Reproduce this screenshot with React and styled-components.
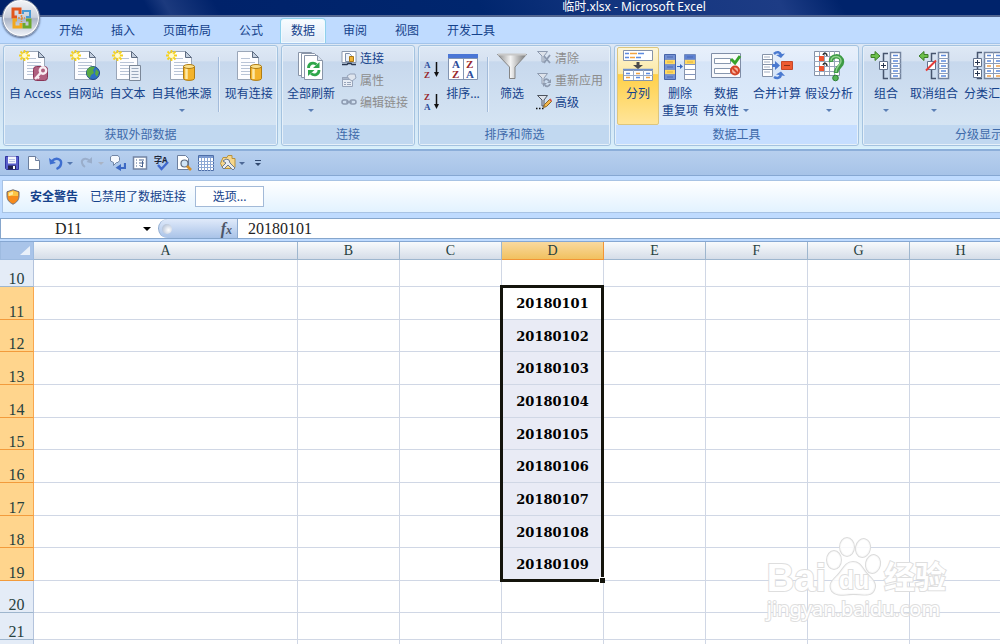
import React from 'react'
import styled, { createGlobalStyle, css } from 'styled-components'

const UI_FONT = '"Noto Sans", "Noto Sans CJK SC", sans-serif'
const SHEET_FONT = '"Liberation Serif", "Noto Sans CJK SC", serif'

const TABS = ['开始', '插入', '页面布局', '公式', '数据', '审阅', '视图', '开发工具']

const COLUMNS = [
  { name: 'A', width: 264 },
  { name: 'B', width: 102 },
  { name: 'C', width: 102 },
  { name: 'D', width: 102 },
  { name: 'E', width: 102 },
  { name: 'F', width: 102 },
  { name: 'G', width: 102 },
  { name: 'H', width: 102 },
]

const ROWS = [
  { number: 10, height: 27 },
  { number: 11, height: 33, value: '20180101' },
  { number: 12, height: 32, value: '20180102' },
  { number: 13, height: 33, value: '20180103' },
  { number: 14, height: 33, value: '20180104' },
  { number: 15, height: 32, value: '20180105' },
  { number: 16, height: 33, value: '20180106' },
  { number: 17, height: 33, value: '20180107' },
  { number: 18, height: 32, value: '20180108' },
  { number: 19, height: 33, value: '20180109' },
  { number: 20, height: 32 },
  { number: 21, height: 27 },
  { number: 22, height: 27 },
]

const SELECTION_HEIGHT = ROWS.filter(row => row.value).reduce(
  (total, row) => total + row.height,
  0
)

function App() {
  return (
    <>
      <GlobalStyle />
      <Window>
        <TitleBar>
          <h1>临时.xlsx - Microsoft Excel</h1>
        </TitleBar>
        <OfficeButton aria-label="Office">
          <OfficeLogo />
        </OfficeButton>
        <TabBar>
          {TABS.map(tab => (
            <Tab key={tab} $active={tab === '数据'}>
              {tab}
            </Tab>
          ))}
        </TabBar>
        <Ribbon />
        <QuickAccess />
        <SecurityBar>
          <ShieldIcon />
          <strong>安全警告</strong>
          <span>已禁用了数据连接</span>
          <OptionsButton>选项...</OptionsButton>
        </SecurityBar>
        <FormulaBar>
          <NameBox aria-label="名称框" defaultValue="D11" />
          <NameArrow aria-label="名称列表">
            <Caret $size={4} $color="#000" />
          </NameArrow>
          <FxArea>
            <FxKnob />
            <FxButton aria-label="插入函数">
              f<small>x</small>
            </FxButton>
          </FxArea>
          <FormulaInput aria-label="编辑栏" defaultValue="20180101" />
        </FormulaBar>
        <Sheet />
        <Watermark />
      </Window>
    </>
  )
}

function Ribbon() {
  return (
    <RibbonBar>
      <Group title="获取外部数据" width={275}>
        <LargeButton icon={<SourceIcon star kind="access" />} label="自 Access" />
        <LargeButton icon={<SourceIcon star kind="web" />} label="自网站" />
        <LargeButton icon={<SourceIcon star kind="text" />} label="自文本" />
        <LargeButton icon={<SourceIcon star kind="db" />} label="自其他来源" arrow />
        <Separator />
        <LargeButton icon={<SourceIcon kind="db" />} label="现有连接" />
      </Group>
      <Group title="连接" width={134}>
        <LargeButton icon={<RefreshIcon />} label="全部刷新" arrow />
        <SmallStack>
          <SmallButton>
            <ConnectionIcon />
            连接
          </SmallButton>
          <SmallButton disabled>
            <PropertiesIcon />
            属性
          </SmallButton>
          <SmallButton disabled>
            <LinkIcon />
            编辑链接
          </SmallButton>
        </SmallStack>
      </Group>
      <Group title="排序和筛选" width={193}>
        <SortStack>
          <SortButton aria-label="升序">
            <SortIcon top="A" bottom="Z" />
          </SortButton>
          <SortButton aria-label="降序">
            <SortIcon top="Z" bottom="A" />
          </SortButton>
        </SortStack>
        <LargeButton icon={<SortDialogIcon />} label="排序..." />
        <Separator />
        <LargeButton icon={<FunnelIcon />} label="筛选" />
        <SmallStack>
          <SmallButton disabled>
            <SmallFunnelIcon kind="clear" />
            清除
          </SmallButton>
          <SmallButton disabled>
            <SmallFunnelIcon kind="again" />
            重新应用
          </SmallButton>
          <SmallButton>
            <SmallFunnelIcon kind="advanced" />
            高级
          </SmallButton>
        </SmallStack>
      </Group>
      <Group title="数据工具" width={245} hot>
        <LargeButton tight hot icon={<ColumnsIcon />} label="分列" />
        <LargeButton tight icon={<DuplicatesIcon />} label="删除" second="重复项" />
        <LargeButton tight icon={<ValidationIcon />} label="数据" second="有效性" arrow />
        <LargeButton tight icon={<ConsolidateIcon />} label="合并计算" />
        <LargeButton tight icon={<WhatIfIcon />} label="假设分析" arrow />
      </Group>
      <Group title="分级显示" width={234}>
        <LargeButton icon={<OutlineIcon kind="group" />} label="组合" arrow />
        <LargeButton icon={<OutlineIcon kind="ungroup" />} label="取消组合" arrow />
        <LargeButton icon={<OutlineIcon kind="subtotal" />} label="分类汇总" />
      </Group>
    </RibbonBar>
  )
}

function Group({ title, width, hot, children }) {
  return (
    <GroupBox $width={width} $hot={hot}>
      <GroupContent>{children}</GroupContent>
      <GroupTitle $hot={hot}>{title}</GroupTitle>
    </GroupBox>
  )
}

function LargeButton({ icon, label, second, arrow, hot, tight }) {
  return (
    <BigButton $hot={hot} $tight={tight}>
      {icon}
      <span>{label}</span>
      {(second || arrow) && (
        <SecondLine>
          {second}
          {arrow && <Caret $size={3} $color="#5a7fb5" />}
        </SecondLine>
      )}
    </BigButton>
  )
}

function QuickAccess() {
  return (
    <QuickBar>
      <QuickButton aria-label="保存">
        <svg width="16" height="16">
          <path d="M1.5 1.500h13v13h-12l-1-1z" fill="#5a5fcb" stroke="#3034a0" />
          <path d="M4 1.500h8v7H4z" fill="#f4f6fd" />
          <path d="M4 10.500h8v4H4z" fill="#23234f" />
          <path d="M9 11h2v3H9z" fill="#fff" />
          <path d="M5 4.500h6M5 6.500h6" stroke="#b9c2e6" />
        </svg>
      </QuickButton>
      <QuickButton aria-label="新建">
        <svg width="16" height="16">
          <path d="M2.500 1.500h7l4 4v9h-11z" fill="#fff" stroke="#6c7f9e" />
          <path d="M9.500 1.500v4h4" fill="#dfe6f2" stroke="#6c7f9e" />
        </svg>
      </QuickButton>
      <QuickPair>
        <QuickButton aria-label="撤消">
          <svg width="16" height="16">
            <path d="M4 6c4-4 10-2 9 3-.4 2.300-2 4-4.500 5" fill="none" stroke="#3f6fd0" strokeWidth="2.400" />
            <path d="M1 3l1 6.500L8 8z" fill="#3f6fd0" />
          </svg>
        </QuickButton>
        <QuickArrow aria-label="撤消列表">
          <Caret $size={3} $color="#5578b0" />
        </QuickArrow>
      </QuickPair>
      <QuickPair>
        <QuickButton aria-label="恢复">
          <svg width="16" height="16">
            <path d="M11 6c-4-4-9-2-8 2 .4 2 1.500 3 3 4" fill="none" stroke="#9aaecb" strokeWidth="2" />
            <path d="M13 2v6.500L7.500 7z" fill="#9aaecb" />
          </svg>
        </QuickButton>
        <QuickArrow aria-label="恢复列表">
          <Caret $size={3} $color="#a9b4c6" />
        </QuickArrow>
      </QuickPair>
      <QuickButton aria-label="繁简转换">
        <svg width="16" height="16">
          <path d="M2 .5h6l1.500 2v3L8 7.500H6.500l-3 3v-3L.5 6V2z" fill="#f5f8fd" stroke="#7186a6" />
          <path d="M15 8v5H9" fill="none" stroke="#3d69c4" strokeWidth="2.200" />
          <path d="M11 9v7l-5.500-3.200z" fill="#3d69c4" />
        </svg>
      </QuickButton>
      <QuickButton aria-label="属性表">
        <svg width="16" height="16">
          <path d="M1.500 2h13v12h-13z" fill="#fff" stroke="#7384a2" strokeWidth="1.500" />
          <path d="M4 5h1M7 5h5M4 8h1M4 11h1M7 8h5M10.500 6v6l-3-1.500" fill="none" stroke="#48628e" />
        </svg>
      </QuickButton>
      <QuickButton aria-label="拼写检查">
        <svg width="16" height="16">
          <text x="0" y="8" fontSize="8" fontWeight="700" fill="#1b2437">字A</text>
          <path d="M4 10l3.500 4L14 7" fill="none" stroke="#4069cd" strokeWidth="2.400" />
        </svg>
      </QuickButton>
      <QuickButton aria-label="打印预览">
        <svg width="16" height="16">
          <path d="M1.500.5h8l3 3v11h-11z" fill="#fff" stroke="#6c7f9e" />
          <circle cx="8.500" cy="8.500" r="3.500" fill="#cfe4f7" stroke="#5c6a80" strokeWidth="1.200" />
          <path d="M11 11l4 4" stroke="#d48f2b" strokeWidth="2.600" />
        </svg>
      </QuickButton>
      <QuickButton aria-label="表格">
        <svg width="16" height="16">
          <path d="M.5.5h15v15H.5z" fill="#fff" stroke="#4d6ea8" />
          <path d="M1 1h14v2H1z" fill="#7c9bd1" />
          <path d="M0 6.500h16M0 9.500h16M0 12.500h16M3.500 3v13M6.500 3v13M9.500 3v13M12.500 3v13" stroke="#8da8d4" />
        </svg>
      </QuickButton>
      <QuickPair>
        <QuickButton aria-label="工具">
          <svg width="16" height="16">
            <path d="M3 2.500h4l1-2h4v3h3v9l-3 1H3l-2.500-5z" fill="#f6d68b" stroke="#b8923c" />
            <path d="M3 6l3-2 3 1 1 3 5 5-2 2-5-5-4 4-2-2 4-4z" fill="#e9edf3" stroke="#6c7a8f" />
          </svg>
        </QuickButton>
        <QuickArrow aria-label="工具列表">
          <Caret $size={3} $color="#4d6896" />
        </QuickArrow>
      </QuickPair>
      <QuickButton aria-label="自定义快速访问工具栏">
        <svg width="16" height="16">
          <path d="M4 5.500h6" stroke="#31496f" />
          <path d="M4 8h6l-3 3z" fill="#31496f" />
        </svg>
      </QuickButton>
    </QuickBar>
  )
}

function Sheet() {
  return (
    <SheetArea>
      <Grid>
        <colgroup>
          <col width="34" />
          {COLUMNS.map(({ name, width }) => (
            <col key={name} width={width} />
          ))}
        </colgroup>
        <thead>
          <tr>
            <Corner aria-label="全选">
              <svg width="10" height="9">
                <path d="M10 0v9H0z" fill="#e9f0fa" />
              </svg>
            </Corner>
            {COLUMNS.map(({ name }) => (
              <ColumnHead key={name} scope="col" $selected={name === 'D'}>
                {name}
              </ColumnHead>
            ))}
          </tr>
        </thead>
        <tbody>
          {ROWS.map(({ number, height, value }) => (
            <tr key={number}>
              <RowHead scope="row" $height={height} $selected={Boolean(value)}>
                {number}
              </RowHead>
              {COLUMNS.map(({ name }) =>
                name === 'D' && value ? (
                  <Cell key={name} $selected={number !== 11}>
                    {value}
                    {number === 11 && (
                      <Selection>
                        <FillHandle />
                      </Selection>
                    )}
                  </Cell>
                ) : (
                  <Cell key={name} />
                )
              )}
            </tr>
          ))}
        </tbody>
      </Grid>
    </SheetArea>
  )
}

function Watermark() {
  return (
    <WatermarkBox>
      <WatermarkLogo>
        <span>Bai</span>
        <Paw>
          <svg width="56" height="60" fill="#fff" fillOpacity="0.8" stroke="#dcdcdc" strokeWidth="2">
            <ellipse cx="8" cy="24" rx="7" ry="9" />
            <ellipse cx="21" cy="11" rx="7" ry="9" />
            <ellipse cx="37" cy="12" rx="7" ry="9" transform="rotate(12 37 12)" />
            <ellipse cx="47" cy="28" rx="7" ry="9" transform="rotate(12 47 28)" />
            <path d="M27 26c8 0 9 7 15 13 5 5 9 9 6 15-3 7-12 4-21 4s-16 3-21-3c-4-7 1-11 6-16s7-13 15-13z" />
          </svg>
          <b>du</b>
        </Paw>
        <em>经验</em>
      </WatermarkLogo>
      <WatermarkUrl>jingyan.baidu.com</WatermarkUrl>
    </WatermarkBox>
  )
}

/* Icons */

function OfficeLogo() {
  return (
    <svg width="24" height="24" fill="none" strokeWidth="3">
      <path d="M11 8V3H4v8h4" stroke="#e2551c" />
      <path d="M14 8V5h7v6h-4" stroke="#4a9ad4" strokeWidth="2" />
      <path d="M8 14H5v7h7v-4" stroke="#f2a81d" />
      <path d="M15 17v4h6v-7h-4" stroke="#6ba82d" />
      <path d="M9 12h7M12.500 9v7" stroke="#e08a3a" strokeWidth="1.500" strokeDasharray="2 1" />
    </svg>
  )
}

function Star() {
  return (
    <g>
      <path
        d="M5.500 0v11M0 5.500h11M1.500 1.500l8 8M9.500 1.500l-8 8"
        stroke="#f5d21f"
        strokeWidth="1.800"
      />
      <circle cx="5.500" cy="5.500" r="2.500" fill="#fffbd0" />
    </g>
  )
}

function Cylinder() {
  return (
    <g stroke="#b07d13">
      <path d="M17.500 16.500v12c0 2.500 11 2.500 11 0v-12z" fill="#f3b32c" />
      <path d="M20.500 18v11" stroke="#fde9a6" strokeWidth="2.500" />
      <ellipse cx="23" cy="16.500" rx="5.500" ry="2" fill="#fbe08c" />
    </g>
  )
}

function SourceIcon({ kind, star }) {
  return (
    <svg width="32" height="32" fill="none">
      <path d="M4.500 1.500h15l6 6v22h-21z" fill="#fdfdff" stroke="#9aa6b8" />
      <path d="M19.500 1.500v6h6z" fill="#c3cedd" stroke="#5f6d82" />
      <path
        d="M8 8.500h9M8 12.500h14M8 15.500h14M8 18.500h14M8 21.500h10M8 24.500h10"
        stroke="#b9c4d6"
      />
      {star && <Star />}
      {kind === 'db' && <Cylinder />}
      {kind === 'access' && (
        <g>
          <rect x="14.500" y="16.500" width="14" height="14" rx="3" fill="#b06080" stroke="#8a3556" />
          <circle cx="24" cy="20.500" r="3.200" stroke="#f9eef2" strokeWidth="2.400" />
          <path d="M21.500 23l-5.500 6M18 26.500l2 2" stroke="#f9eef2" strokeWidth="2.400" />
        </g>
      )}
      {kind === 'web' && (
        <g>
          <circle cx="23" cy="23" r="6.500" fill="#2f6fc4" stroke="#1d4788" />
          <path d="M17 20c2-4 6-4 8-3l-2 3 1 3-3 2-1 3c-3-1-4-5-3-8zM26 19l3 3-2 5-2-3z" fill="#58a943" />
        </g>
      )}
      {kind === 'text' && (
        <g>
          <path d="M17.500 15.500h11v15h-11z" fill="#eef2f8" stroke="#7b8798" />
          <path d="M19.500 18.500h7M19.500 21.500h7M19.500 24.500h7M19.500 27.500h7" stroke="#9ba9bd" />
        </g>
      )}
    </svg>
  )
}

function RefreshIcon() {
  return (
    <svg width="32" height="32" fill="#fff" stroke="#8995a8">
      <path d="M3.500 2.500h13l4 4v19h-17z" />
      <path d="M6.500 3.500h13l4 4v20h-17z" />
      <path d="M9.500 5.500h13l5 5v19h-18z" />
      <path d="M22.500 5.500v5h5" fill="#dbe3ee" />
      <g fill="none" stroke="#2ea64a" strokeWidth="2.800">
        <path d="M13.500 18c0-5 5-6 8-3.500M24 20c0 5-5 6-8 3.500" />
      </g>
      <path d="M24.500 12v6H18z" fill="#2ea64a" stroke="none" />
      <path d="M13 26v-6h6.500z" fill="#2ea64a" stroke="none" />
    </svg>
  )
}

function ConnectionIcon() {
  return (
    <svg width="16" height="16" fill="none">
      <path d="M1 1.500h14v11H1z" fill="#fff" stroke="#8a98ae" />
      <path d="M4.500 3.500h4l2 2v6h-6z" fill="#eef3fa" stroke="#8191aa" />
      <path d="M8.500 6.500h4v5h-4z" fill="#f0b234" stroke="#a87817" />
      <path d="M1 14.500h5l1-1h3l1 1h4" stroke="#26354f" strokeWidth="1.500" />
    </svg>
  )
}

function PropertiesIcon() {
  return (
    <svg width="16" height="16" fill="none" stroke="#98a5bb">
      <path d="M1.500 5.500h10v9h-10z" fill="#e8edf5" />
      <path d="M1.500 5.500h10v2h-10z" fill="#aab7cb" />
      <path d="M3 10.500h2M6 10.500h4M3 12.500h2M6 12.500h4" />
      <path d="M6 4l3-2h5l1 4-4 3-3-2z" fill="#dfe5ee" />
    </svg>
  )
}

function LinkIcon() {
  return (
    <svg width="16" height="16" fill="none" stroke="#8d9bb1" strokeWidth="1.500">
      <rect x="1" y="6" width="6" height="4" rx="2" />
      <rect x="9" y="6" width="6" height="4" rx="2" />
      <path d="M5 8h6" />
    </svg>
  )
}

function SortIcon({ top, bottom }) {
  const color = letter => (letter === 'A' ? '#2b4d9b' : '#97262b')
  return (
    <svg width="16" height="18" fontSize="9" fontWeight="700" fontFamily="Liberation Serif">
      <text x="0" y="7" fill={color(top)}>{top}</text>
      <text x="0" y="17" fill={color(bottom)}>{bottom}</text>
      <path d="M12.500 1v12" stroke="#111" strokeWidth="1.500" />
      <path d="M10 11h5l-2.500 5z" fill="#111" />
    </svg>
  )
}

function SortDialogIcon() {
  return (
    <svg width="32" height="32" fontSize="11" fontWeight="700" fontFamily="Liberation Serif">
      <path d="M1.500 4.500h29v25h-29z" fill="#fff" stroke="#8294b1" />
      <path d="M1 4h30v4H1z" fill="#4a76d6" />
      <path d="M1.500 8.500h29M16.500 8v21" stroke="#8496b3" />
      <g fill="#2b4d9b">
        <text x="5" y="18">A</text>
        <text x="19" y="28">A</text>
      </g>
      <g fill="#97262b">
        <text x="5" y="28">Z</text>
        <text x="19" y="18">Z</text>
      </g>
    </svg>
  )
}

function FunnelIcon() {
  return (
    <svg width="32" height="32">
      <defs>
        <linearGradient id="funnel">
          <stop offset="0" stopColor="#8b8b8b" />
          <stop offset="0.45" stopColor="#f4f4f4" />
          <stop offset="1" stopColor="#737373" />
        </linearGradient>
      </defs>
      <path d="M1.500 4.500h29L19 17v11.500h-5.500V17z" fill="url(#funnel)" stroke="#858585" />
      <path d="M2 4.500h28" stroke="#c9c9c9" strokeWidth="2" />
    </svg>
  )
}

function SmallFunnelIcon({ kind }) {
  const stroke = kind === 'advanced' ? '#4d535e' : '#8e9bb0'
  return (
    <svg width="16" height="16" fill="none" stroke={stroke}>
      <path d="M1.500 1.500h10L8 6v6H6V6z" fill="#dde2ea" />
      {kind === 'clear' && <path d="M8 6l6 7M14 5l-6 8" strokeWidth="1.800" />}
      {kind === 'again' && (
        <g>
          <path d="M8 9c1-3 4-2 5 0M14 12c-1 3-4 3-5 1" strokeWidth="1.800" />
          <path d="M15 7v4h-4zM7 15v-4h4z" fill={stroke} stroke="none" />
        </g>
      )}
      {kind === 'advanced' && (
        <g>
          <path d="M0 14.500h8" stroke="#111" strokeWidth="1.500" strokeDasharray="1.500 1.500" />
          <path d="M7.500 13.500l1-3 5-5 2 2-5 5z" fill="#f2b64a" stroke="#8b6420" />
          <path d="M13 5.500l1.500-1 1.500 2-1 1z" fill="#d9534a" stroke="none" />
        </g>
      )}
    </svg>
  )
}

function ColumnsIcon() {
  return (
    <svg width="32" height="32" fill="#fff">
      <path d="M1.500.5h29v10h-29z" stroke="#8693a9" />
      <path d="M1.500 20.500h29v10h-29z" stroke="#8693a9" />
      <path d="M1 19.500h30" stroke="#6b8fd0" strokeWidth="1.500" />
      <path d="M3 3.500h4M16 3.500h6M3 7.500h4M14 7.500h5M4 23.500h4M14 27.500h4M24 23.500h4" stroke="#5d8be0" strokeWidth="1.500" />
      <path d="M8 3.500h7M8 7.500h5M4 27.500h4M14 23.500h4M24 27.500h4" stroke="#f1a341" strokeWidth="1.500" />
      <path d="M11.500 20v10M21.500 20v10M2 25.500h29" stroke="#9aabc8" />
      <path d="M14.500 12h3v3h3.500L16 19l-5-4h3.500z" fill="#4a4a4a" />
    </svg>
  )
}

function DuplicatesIcon() {
  return (
    <svg width="32" height="32">
      <path d="M.5 4.500h11v25H.5z" fill="#7391d3" stroke="#4764a9" />
      <path d="M1 10h10v4H1zM1 20h10v4H1z" fill="#ffd964" />
      <path d="M20.500 4.500h11v25h-11z" fill="#fff" stroke="#8694ad" />
      <path d="M20.500 4.500h11v5h-11z" fill="#5e82d2" />
      <path d="M21 10h10v4H21z" fill="#ffd964" />
      <path d="M1 9.500h10M1 14.500h10M1 19.500h10M1 24.500h10M21 9.500h10M21 14.500h10M21 19.500h10M21 24.500h10" stroke="#8295bd" />
      <path d="M3 7h6M3 17h6M3 27h6M23 7h6" stroke="#4a69b4" />
      <path d="M3 12h6M3 22h6M23 12h6" stroke="#e0b23c" />
      <path d="M13 16.500h4" stroke="#3465bd" />
      <path d="M16 14l3 2.500-3 2.500z" fill="#3465bd" />
    </svg>
  )
}

function ValidationIcon() {
  return (
    <svg width="32" height="32" fill="none">
      <path d="M1.500 3.500h29v24h-29z" fill="#f7f9fc" stroke="#7f8da6" />
      <path d="M4.500 8.500h16v5h-16zM4.500 18.500h16v5h-16z" fill="#fff" stroke="#8797ae" />
      <path d="M21 9l4 4 5-7" stroke="#37a32b" strokeWidth="3" />
      <circle cx="25" cy="20.500" r="4" fill="#f7b39f" stroke="#d44427" strokeWidth="2" />
      <path d="M22.500 18l5 5" stroke="#d44427" strokeWidth="2" />
    </svg>
  )
}

function ConsolidateIcon() {
  return (
    <svg width="32" height="32" fill="none">
      <path d="M1.500 4.500h10v22h-10z" fill="#fff" stroke="#8593a9" />
      <path d="M1.500 9.500h10M1.500 14.500h10M1.500 19.500h10" stroke="#8593a9" />
      <path d="M3 7h6M3 12h6M3 17h6M3 22h6" stroke="#a3afc3" />
      <path d="M13 4c3-3 6-2 7 1M13 27c3 2 6 1 7-2" stroke="#4b7ad0" strokeWidth="2.600" />
      <path d="M24 3.500L20 8l-5-3zM24 26l-4-4.500-5 3z" fill="#4b7ad0" />
      <path d="M11 14h3v-3l5 4.500-5 4.500v-3h-3z" fill="#4b7ad0" />
      <path d="M20.500 11.500h11v8h-11z" fill="#ee5a30" stroke="#c4472a" />
      <path d="M23 15.500h6" stroke="#8b2f16" />
    </svg>
  )
}

function WhatIfIcon() {
  return (
    <svg width="32" height="32" fill="none">
      <path d="M1.500 1.500h25v24h-25z" fill="#fff" stroke="#8491a7" />
      <path d="M6.500 1v24M11.500 1v24M16.500 1v24M21.500 1v24M1 6.500h25M1 11.500h25M1 16.500h25M1 21.500h25" stroke="#98a5ba" />
      <path d="M6 6h5v5H6zM6 16h5v5H6z" fill="#f0512c" />
      <path d="M10 5c1-3 4-2 4 1M10 15c1-3 4-2 4 1" stroke="#333" strokeWidth="1.500" />
      <path d="M18 12c-1-7 11-8 11 0 0 5-6 5-6 11" stroke="#3d9b44" strokeWidth="4.500" />
      <path d="M18 11c0-6 10-6 10 0 0 4-5 5-5 11" stroke="#8fd08c" strokeWidth="1.500" />
      <circle cx="22.500" cy="28" r="2.800" fill="#55b456" stroke="#2c7f35" />
    </svg>
  )
}

function OutlineIcon({ kind }) {
  const subtotal = kind === 'subtotal'
  return (
    <svg width="32" height="32" fill="none">
      <path d={subtotal ? 'M12.500 2.500h18v26h-18z' : 'M20.500 2.500h10v26h-10z'} fill="#fff" stroke="#74849e" strokeWidth="1.500" />
      <path d={subtotal ? 'M12 8.500h19M12 13.500h19M12 18.500h19M12 23.500h19M21.500 2v27' : 'M20 8.500h11M20 13.500h11M20 18.500h11M20 23.500h11'} stroke="#8d9db8" />
      <path d={subtotal ? 'M15 5.500h4M24 5.500h4M15 11h4M24 11h4M15 21h4M24 21h4' : 'M23 5.500h5M23 11h5M23 16h5M23 21h5M23 26h5'} stroke="#5e8bdd" strokeWidth="1.500" />
      {subtotal ? (
        <g>
          <path d="M15 16h4M24 16h4M15 26h4M24 26h4" stroke="#f0a04b" strokeWidth="1.500" />
          <path d="M10 2.500H5.500v26H10" stroke="#46546d" strokeWidth="1.500" />
          <path d="M1.500 8.500h8v8h-8zM1.500 19.500h8v8h-8z" fill="#fff" stroke="#63728c" />
          <path d="M3 12.500h5M5.500 10v5M3 23.500h5M5.500 21v5" stroke="#26344e" />
        </g>
      ) : (
        <path d="M18 3.500h-4.500v25H18" stroke="#46546d" strokeWidth="1.500" />
      )}
      {kind === 'group' && (
        <g>
          <path d="M9.500 11.500h8v8h-8z" fill="#fff" stroke="#63728c" />
          <path d="M11 15.500h5M13.500 13v5" stroke="#26344e" />
          <path d="M1 4.500h4v-3L10 6l-5 4.500v-3H1z" fill="#6cc04b" stroke="#3c7d28" />
        </g>
      )}
      {kind === 'ungroup' && (
        <g>
          <path d="M9.500 11.500h8v8h-8z" fill="#fff" stroke="#63728c" />
          <path d="M8 20.500L18 10.500" stroke="#e63b37" strokeWidth="2" />
          <path d="M10 4.500H6v-3L1 6l5 4.500v-3h4z" fill="#6cc04b" stroke="#3c7d28" />
        </g>
      )}
    </svg>
  )
}

function ShieldIcon() {
  return (
    <svg width="14" height="16">
      <path d="M7 .8l6 2v4c0 4-2 6.500-6 8.400C3 13.300 1 10.800 1 6.800v-4z" fill="#f78b1c" stroke="#6b6d75" />
      <path d="M7 1.500L2 3.200V7h5zM7 1.500l5 1.700V7H7z" fill="#fcc545" />
      <path d="M3 4l4-1.500v3L3 7z" fill="#fde9a2" />
    </svg>
  )
}

/* Frame */

const GlobalStyle = createGlobalStyle`
  body {
    margin: 0;
    overflow: hidden;
    font-family: ${UI_FONT};
    font-size: 12px;
    color: #15428b;
  }

  *, *::before, *::after {
    box-sizing: border-box;
  }

  button, input {
    margin: 0;
    padding: 0;
    border: 0;
    background: none;
    color: inherit;
    font: inherit;
  }

  svg {
    flex: none;
    display: block;
  }
`

const Window = styled.div`
  position: relative;
  display: flex;
  flex-direction: column;
  height: 100vh;
  overflow: hidden;
  background: #bfdbff;
`

const TitleBar = styled.header`
  flex: none;
  display: flex;
  justify-content: center;
  height: 17px;
  padding-left: 268px;
  border-bottom: 2px solid #52658f;
  background: linear-gradient(
    60deg,
    #00226a 15%,
    #1c3a7e 17%,
    #00226a 22%,
    #00266e 48%,
    #12347e 60%,
    #1d3c85 78%,
    #00236b 84%
  );

  h1 {
    margin: 0;
    font-size: 12px;
    font-weight: 400;
    line-height: 13px;
    color: #fff;
  }
`

const OfficeButton = styled.button`
  position: absolute;
  top: -1px;
  left: 2px;
  display: flex;
  align-items: center;
  justify-content: center;
  width: 38px;
  height: 38px;
  border: 1px solid #8a94a8;
  border-radius: 50%;
  background: linear-gradient(#f4f5f8, #c9cfdb 48%, #a9b3c6 52%, #f2f5fa);
  box-shadow: inset 0 0 0 1px #fff, 0 1px 2px #4d5f80;
`

const TabBar = styled.nav`
  flex: none;
  display: flex;
  align-items: flex-end;
  gap: 6px;
  height: 26px;
  padding-left: 48px;
  background: #bfdbff;
`

const Tab = styled.button`
  height: 25px;
  padding: 0 10px;
  border: 1px solid transparent;
  border-bottom: 0;
  border-radius: 4px 4px 0 0;
  line-height: 22px;

  ${({ $active }) =>
    $active &&
    css`
      border-color: #8fd0ec;
      background: linear-gradient(#f8fcff, #e0ebf8);
      box-shadow: inset 0 0 0 1px #eefaff;
    `}
`

const RibbonBar = styled.section`
  flex: none;
  display: flex;
  gap: 3px;
  height: 106px;
  padding: 1px 0 2px 3px;
  border-top: 1px solid #a3c4ea;
  border-bottom: 1px solid #d8f4fd;
  background: linear-gradient(#dde8f5, #c9daee 20%, #d9eefa);
  overflow: hidden;
`

const GroupBox = styled.div`
  flex: none;
  display: flex;
  flex-direction: column;
  width: ${({ $width }) => $width}px;
  border: 1px solid #a4c3e0;
  border-radius: 3px;
  box-shadow: inset 0 0 0 1px #e6f0f9;
  background: ${({ $hot }) =>
    $hot
      ? 'linear-gradient(#e8f0fb, #e2ecfa 15%, #d6e5f8 16%, #e0edfb)'
      : 'linear-gradient(#dee8f5, #d6e2f1 15%, #c7d8ed 16%, #d9e8f5)'};
`

const GroupContent = styled.div`
  flex: 1;
  display: flex;
  min-height: 0;
  padding: 1px 2px 0;
`

const GroupTitle = styled.div`
  height: 19px;
  margin: 0 1px 1px;
  line-height: 20px;
  text-align: center;
  color: #3e6aaa;
  background: ${({ $hot }) => ($hot ? '#c6deff' : '#c1d8f0')};
`

const BigButton = styled.button`
  flex: none;
  display: flex;
  flex-direction: column;
  align-items: center;
  min-width: 42px;
  height: 78px;
  padding: 2px ${({ $tight }) => ($tight ? 1 : 2)}px 0;
  border: 1px solid transparent;
  border-radius: 2px;
  line-height: 17px;
  white-space: nowrap;

  svg {
    margin-bottom: 3px;
  }

  ${({ $hot }) =>
    $hot &&
    css`
      border-color: #ddc67e;
      background: linear-gradient(#fdf6d6, #fce9a6 34%, #ffd048 35%, #ffe59a);
    `}
`

const SecondLine = styled.span`
  display: flex;
  align-items: center;
  gap: 4px;
  height: 17px;
`

const Caret = styled.i`
  border: ${({ $size }) => $size}px solid transparent;
  border-top-color: ${({ $color }) => $color};
  border-bottom: 0;
`

const Separator = styled.span`
  width: 2px;
  height: 55px;
  margin: 10px 2px 0 3px;
  border-left: 1px solid #a3bbda;
  border-right: 1px solid #e9f1fa;
`

const SmallStack = styled.div`
  display: flex;
  flex-direction: column;
  padding: 0 3px;
`

const SmallButton = styled.button`
  display: flex;
  align-items: center;
  gap: 3px;
  height: 22px;
  white-space: nowrap;

  &:disabled {
    color: #8d8d8d;
  }
`

const SortStack = styled.div`
  display: flex;
  flex-direction: column;
  gap: 14px;
  padding: 14px 2px 0 3px;
`

const SortButton = styled.button`
  height: 18px;
`

const QuickBar = styled.div`
  flex: none;
  display: flex;
  align-items: center;
  gap: 6px;
  height: 27px;
  padding-left: 4px;
  border-top: 2px solid #8caed9;
  border-bottom: 1px solid #86a7d2;
  background: linear-gradient(#b7cfee, #a7c3e8);
`

const QuickPair = styled.div`
  display: flex;
  align-items: center;
`

const QuickButton = styled.button`
  width: 16px;
  height: 16px;
`

const QuickArrow = styled.button`
  display: flex;
  justify-content: flex-end;
  width: 9px;
`

const SecurityBar = styled.div`
  flex: none;
  display: flex;
  align-items: center;
  height: 33px;
  margin: 4px 0 5px 2px;
  padding-left: 3px;
  border: 1px solid #a8c3e4;
  border-right: 0;
  background: linear-gradient(#fff, #e2f2ff);
  line-height: 18px;

  strong {
    margin: 0 12px 0 10px;
  }
`

const OptionsButton = styled.button`
  width: 69px;
  height: 21px;
  margin-left: 9px;
  border: 1px solid #a3bad8;
  background: #fff;
`

const FormulaBar = styled.div`
  flex: none;
  display: flex;
  height: 21px;
  border-top: 1px solid #86a6cc;
  border-bottom: 1px solid #86a6cc;
  background: #fff;
  font-family: ${SHEET_FONT};
  font-size: 16px;
  color: #222;
`

const NameBox = styled.input`
  width: 136px;
  border-left: 1px solid #86a6cc;
  text-align: center;
`

const NameArrow = styled.button`
  display: flex;
  align-items: center;
  justify-content: center;
  width: 22px;
`

const FxArea = styled.div`
  display: flex;
  align-items: center;
  justify-content: space-between;
  width: 80px;
  padding: 0 5px 0 3px;
  border: 1px solid #8eabd0;
  border-width: 0 1px;
  border-radius: 10px 0 0 10px;
  background: linear-gradient(#e0eafa, #a9c3e8);
`

const FxKnob = styled.span`
  width: 10px;
  height: 10px;
  border-radius: 50%;
  background: radial-gradient(circle at 65% 60%, #fff, #9fb0ca);
`

const FxButton = styled.button`
  font-style: italic;
  font-weight: 700;
  color: #4c5568;

  small {
    font-size: 12px;
  }
`

const FormulaInput = styled.input`
  flex: 1;
  padding-left: 10px;
`

/* Sheet */

const SheetArea = styled.main`
  flex: 1;
  min-height: 0;
  margin-top: 2px;
  border-top: 1px solid #86a7d2;
  overflow: hidden;
  background: #fff;
`

const Grid = styled.table`
  table-layout: fixed;
  width: 1012px;
  border-spacing: 0;
  font-family: ${SHEET_FONT};
`

const Corner = styled.th`
  height: 18px;
  padding: 0 3px 0 0;
  border: 1px solid #9ebbe0;
  border-top: 0;
  background: #a9c4e9;

  svg {
    margin-left: auto;
  }
`

const ColumnHead = styled.th`
  height: 18px;
  padding: 0;
  border-right: 1px solid #9eb6ce;
  border-bottom: 1px solid #9eb6ce;
  background: linear-gradient(#f8fafc, #d5dde8);
  font-size: 14px;
  font-weight: 400;
  line-height: 17px;
  color: #27413e;

  ${({ $selected }) =>
    $selected &&
    css`
      border-color: #f29536;
      background: linear-gradient(#f9d99f, #f1c15f);
    `}
`

const RowHead = styled.th`
  height: ${({ $height }) => $height}px;
  padding: 0;
  border-right: 1px solid ${({ $selected }) => ($selected ? '#f9a74e' : '#b3c3dc')};
  border-bottom: 1px solid ${({ $selected }) => ($selected ? '#f29b3c' : '#9eb6ce')};
  background: ${({ $selected }) => ($selected ? '#ffd58d' : '#e4ecf7')};
  font-size: 16px;
  font-weight: 400;
  line-height: 15px;
  vertical-align: bottom;
  color: #27413e;
`

const Cell = styled.td`
  position: relative;
  padding: 2px 0 0;
  border-right: 1px solid #d0d7e5;
  border-bottom: 1px solid #d0d7e5;
  background: ${({ $selected }) => ($selected ? '#e9ebf5' : '#fff')};
  font-family: 'DejaVu Serif', serif;
  font-size: 13px;
  font-weight: 700;
  line-height: 16px;
  text-align: center;
  color: #000;
`

const Selection = styled.div`
  position: absolute;
  z-index: 1;
  top: -2px;
  left: -2px;
  width: 104px;
  height: ${SELECTION_HEIGHT + 3}px;
  border: 3px solid #14140c;
`

const FillHandle = styled.span`
  position: absolute;
  right: -4px;
  bottom: -4px;
  width: 6px;
  height: 6px;
  border: 1px solid #fff;
  border-width: 1px 0 0 1px;
  background: #14140c;
`

/* Watermark */

const WatermarkBox = styled.div`
  position: absolute;
  right: 54px;
  bottom: 22px;
  z-index: 2;
  font-family: 'Noto Sans', 'Noto Sans CJK SC', sans-serif;
  color: #fff;
  -webkit-text-stroke: 2px #dedede;
  paint-order: stroke fill;
`

const WatermarkLogo = styled.div`
  display: flex;
  align-items: flex-end;
  font-family: 'Liberation Sans', 'Noto Sans CJK SC', sans-serif;
  font-size: 38px;
  font-weight: 700;
  line-height: 36px;

  em {
    margin-left: 2px;
    font-size: 31px;
    font-style: normal;
  }
`

const Paw = styled.div`
  position: relative;

  b {
    position: absolute;
    right: 0;
    bottom: 0;
    left: 0;
    text-align: center;
    font-size: 25px;
    line-height: 32px;
  }
`

const WatermarkUrl = styled.div`
  font-size: 20px;
  line-height: 26px;
`

export default App
